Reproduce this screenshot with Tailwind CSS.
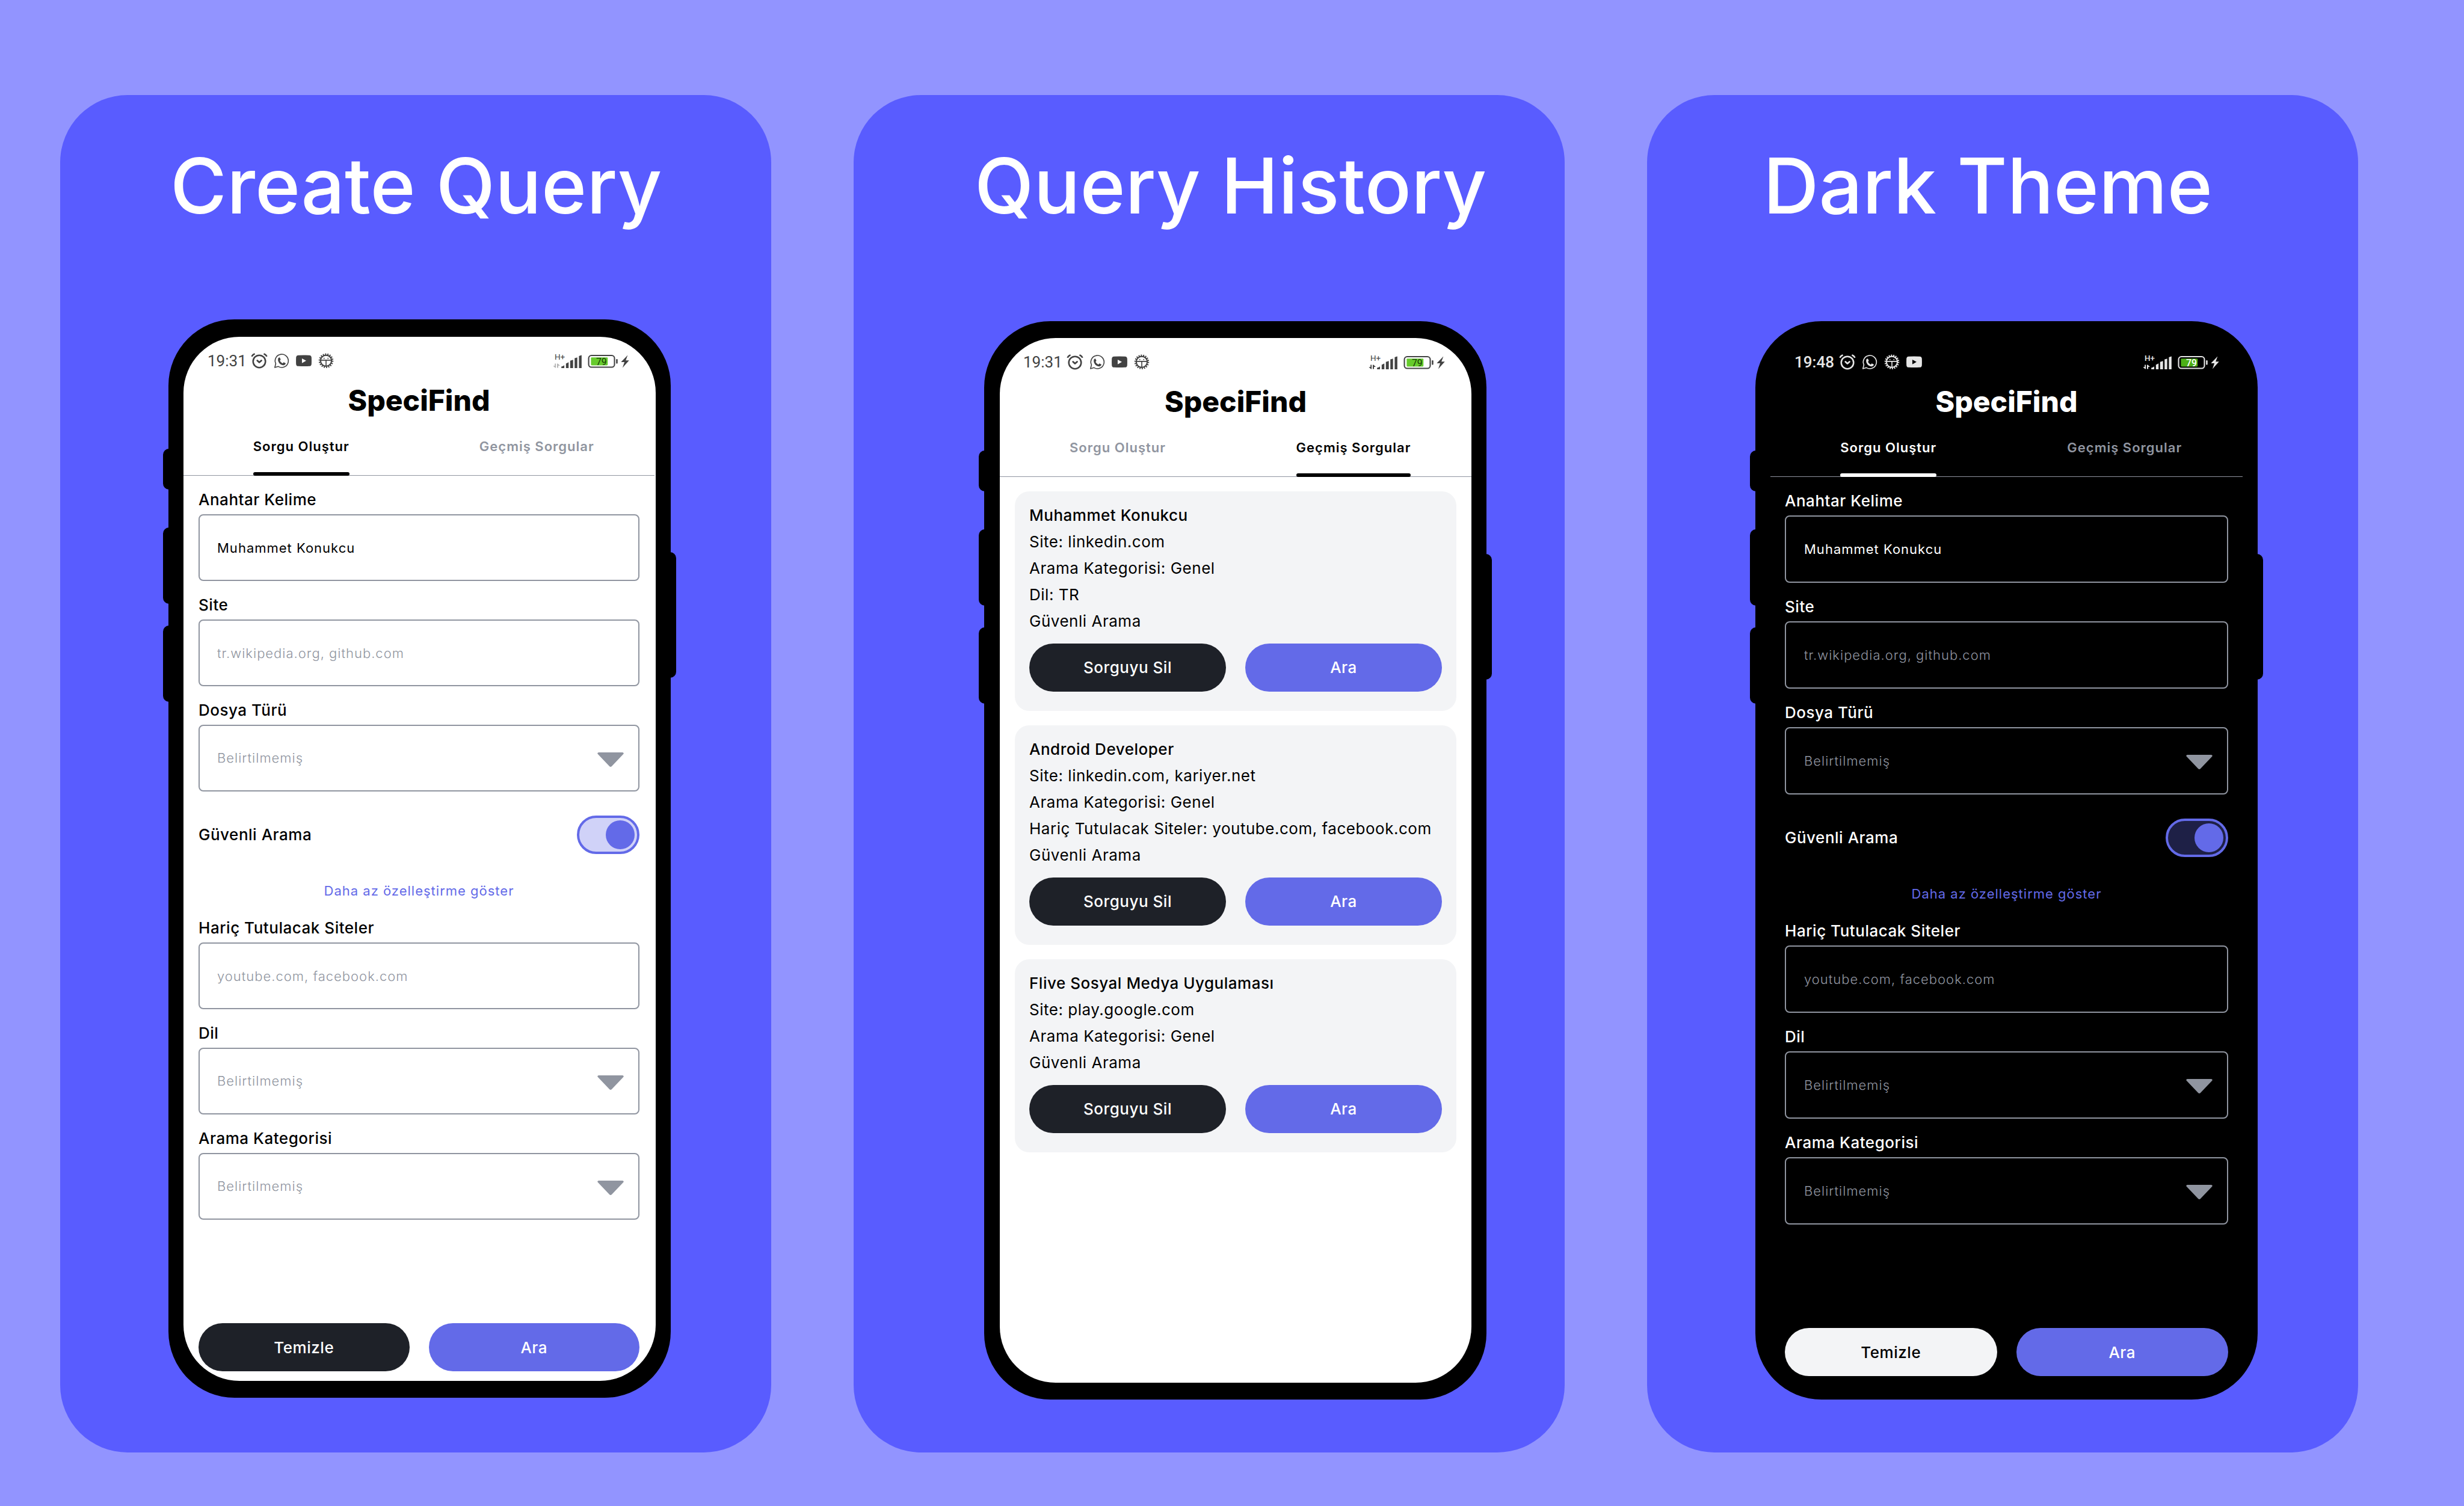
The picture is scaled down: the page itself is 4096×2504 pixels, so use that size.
<!DOCTYPE html>
<html lang="tr">
<head>
<meta charset="utf-8">
<meta name="viewport" content="width=device-width, initial-scale=1">
<title>SpeciFind</title>
<script src="https://cdn.jsdelivr.net/npm/@tailwindcss/browser@4"></script>
</head>
<body class="bg-[#9294ff] font-['Inter',sans-serif] antialiased">

<!-- Shared icon shapes -->
<svg class="hidden" aria-hidden="true">
  <symbol id="alarm" viewBox="378 53 120 120">
    <g fill="none" stroke="currentColor" stroke-linecap="round" stroke-linejoin="round">
      <circle cx="438" cy="117" r="44" stroke-width="11"/>
      <path d="M384 82Q391 68 406 63M492 82Q485 68 470 63" stroke-width="11" stroke-linecap="butt"/>
      <path d="M424 111l14 13 15-13" stroke-width="12"/>
    </g>
  </symbol>
  <symbol id="whatsapp" viewBox="539 53 120 120">
    <path d="M551 160l7-27a47 47 0 1 1 18 20z" fill="none" stroke="currentColor" stroke-width="7" stroke-linejoin="round"/>
    <path d="M574 97q4-9 12-9l7 15-6 9q7 14 20 19l7-8 15 7q0 9-12 14-19 3-35-16-11-14-8-31z" fill="currentColor"/>
  </symbol>
  <symbol id="youtube" viewBox="695 53 120 120">
    <path fill="currentColor" fill-rule="evenodd" d="M716 73q38-2 78 0 15 1 16 16 1 23 0 46-1 15-16 16-40 2-78 0-15-1-16-16-1-23 0-46 1-15 16-16zM742 96v33l30-17z"/>
  </symbol>
  <symbol id="bug" viewBox="849 53 120 120">
    <g fill="none" stroke="currentColor">
      <circle cx="909" cy="112" r="39" stroke-width="9"/>
      <circle cx="909" cy="112" r="47" stroke-width="11" stroke-dasharray="8 8.4"/>
      <path d="M870 108h78M909 108v42" stroke-width="7"/>
    </g>
    <circle cx="895" cy="95" r="4" fill="currentColor"/>
    <circle cx="923" cy="95" r="4" fill="currentColor"/>
  </symbol>
  <symbol id="caret" viewBox="0 0 44 28">
    <path fill="currentColor" d="M2 4h40q3 1 1 3L24 27q-2 2-4 0L1 7q-2-2 1-3z"/>
  </symbol>
  <symbol id="signal" viewBox="0 0 206 112">
    <path fill="currentColor" d="M60 108V97q12-2 21-10v21zM93 108V75q9-3 19-9v42zM123 108V55q10-3 21-7v60zM155 108V37q10-3 19-6v77zM186 108V22q8-4 19-7v93z"/>
  </symbol>
  <symbol id="arrows" viewBox="0 0 52 36">
    <path fill="currentColor" d="M13 3h8v31h-5L0 19h13zM29 3h5l17 15H38v15h-9z"/>
  </symbol>
  <symbol id="bolt" viewBox="0 0 60 90">
    <path fill="currentColor" d="M49 0L1 50h25L12 90 59 38H35z"/>
  </symbol>
</svg>

<main class="grid min-h-screen grid-cols-3 gap-[137px] pt-[158px] pr-[176px] pb-[89px] pl-[100px]">

  <!-- Create query -->
  <section class="flex flex-col rounded-[112px] bg-[#595cff] pt-[71px] pb-[91px]">
    <h2 class="pl-[183px] text-[128px] leading-[160px] font-medium whitespace-nowrap text-white">Create Query</h2>
    <div class="relative mt-[142px] mr-[167px] ml-[180px] flex flex-1 flex-col rounded-[110px] bg-black px-[25px] pt-[29px] pb-[28px]">
      <span class="absolute top-[215px] -left-[9px] h-[68px] w-[20px] rounded-l-[10px] bg-black"></span>
      <span class="absolute top-[346px] -left-[9px] h-[127px] w-[20px] rounded-l-[10px] bg-black"></span>
      <span class="absolute top-[509px] -left-[9px] h-[127px] w-[20px] rounded-l-[10px] bg-black"></span>
      <span class="absolute top-[387px] -right-[9px] h-[209px] w-[20px] rounded-r-[10px] bg-black"></span>

      <div class="flex flex-1 flex-col overflow-hidden rounded-[93px] bg-white pt-[27px] pr-[2px] pb-[16px] text-black">
        <div class="flex h-[26px] items-center pr-[42px] pl-[40px] font-['Roboto',sans-serif] text-[#424242]">
          <span class="w-[72px] text-[26px] leading-[26px]">19:31</span>
          <span class="flex gap-[9px]">
            <svg class="size-[28px]"><use href="#alarm"/></svg>
            <svg class="size-[28px]"><use href="#whatsapp"/></svg>
            <svg class="size-[28px]"><use href="#youtube"/></svg>
            <svg class="size-[28px]"><use href="#bug"/></svg>
          </span>
          <svg class="ml-auto h-[26px] w-[127px]" viewBox="40 53 545 112">
            <text x="52" y="100" font-size="58" fill="currentColor">H+</text>
            <use href="#arrows" x="40" y="125" width="52" height="36" color="#b4b4b4"/>
            <use href="#signal" x="40" y="53" width="206" height="112"/>
            <rect x="295.500" y="70.500" width="185" height="84" rx="20" fill="none" stroke="currentColor" stroke-width="9"/>
            <rect x="492" y="96" width="11" height="33" rx="5" fill="currentColor"/>
            <rect x="312" y="84" width="120" height="57" rx="5" fill="#66cb2c"/>
            <text x="349" y="138" font-size="68" fill="#173a05">79</text>
            <use href="#bolt" x="526" y="68" width="60" height="90"/>
          </svg>
        </div>
        <h1 class="mt-[24px] text-center text-[48px] leading-[58px] font-extrabold">SpeciFind</h1>
        <nav class="grid h-[96px] grid-cols-2 border-b border-[#9095a0] text-[22px] font-semibold tracking-[1px]">
          <button type="button" class="flex justify-center"><span class="relative flex h-full items-center">Sorgu Oluştur<span class="absolute inset-x-0 -bottom-px h-[6px] rounded-[3px] bg-black"></span></span></button>
          <button type="button" class="flex items-center justify-center text-[#9095a0]">Geçmiş Sorgular</button>
        </nav>

        <form class="flex flex-1 flex-col px-[25px]">
          <label for="l-key" class="h-[64px] pt-[24px] text-[26px] leading-[32px] font-medium tracking-[0.02em]">Anahtar Kelime</label>
          <input id="l-key" type="text" value="Muhammet Konukcu" class="h-[111px] rounded-[8px] border-2 border-[#9095a0] bg-transparent px-[29px] text-[22px] tracking-[1px]">
          <label for="l-site" class="h-[64px] pt-[24px] text-[26px] leading-[32px] font-medium tracking-[0.02em]">Site</label>
          <input id="l-site" type="text" placeholder="tr.wikipedia.org, github.com" class="h-[111px] rounded-[8px] border-2 border-[#9095a0] bg-transparent px-[29px] text-[22px] font-light tracking-[1px] placeholder:text-[#9095a0]">
          <label for="l-type" class="h-[64px] pt-[24px] text-[26px] leading-[32px] font-medium tracking-[0.02em]">Dosya Türü</label>
          <div class="relative">
            <select id="l-type" class="block h-[111px] w-full appearance-none rounded-[8px] border-2 border-[#9095a0] bg-transparent px-[29px] text-[22px] font-light tracking-[1px] text-[#9095a0]"><option>Belirtilmemiş</option></select>
            <svg class="pointer-events-none absolute top-[42px] right-[26px] h-[28px] w-[44px] text-[#9095a0]"><use href="#caret"/></svg>
          </div>
          <div class="mt-[40px] flex h-[64px] items-center justify-between">
            <label for="l-safe" class="text-[26px] leading-[32px] font-medium tracking-[0.02em]">Güvenli Arama</label>
            <input id="l-safe" type="checkbox" role="switch" checked class="flex h-[64px] w-[104px] appearance-none items-center justify-end rounded-full border-4 border-[#636ae8] bg-[#d0d2f8] pr-[4px] before:size-[48px] before:rounded-full before:bg-[#636ae8]">
          </div>
          <button type="button" class="mt-[39px] h-[44px] text-[22px] tracking-[1px] text-[#636ae8]">Daha az özelleştirme göster</button>
          <label for="l-not" class="h-[64px] pt-[24px] text-[26px] leading-[32px] font-medium tracking-[0.02em]">Hariç Tutulacak Siteler</label>
          <input id="l-not" type="text" placeholder="youtube.com, facebook.com" class="h-[111px] rounded-[8px] border-2 border-[#9095a0] bg-transparent px-[29px] text-[22px] font-light tracking-[1px] placeholder:text-[#9095a0]">
          <label for="l-lang" class="h-[64px] pt-[24px] text-[26px] leading-[32px] font-medium tracking-[0.02em]">Dil</label>
          <div class="relative">
            <select id="l-lang" class="block h-[111px] w-full appearance-none rounded-[8px] border-2 border-[#9095a0] bg-transparent px-[29px] text-[22px] font-light tracking-[1px] text-[#9095a0]"><option>Belirtilmemiş</option></select>
            <svg class="pointer-events-none absolute top-[42px] right-[26px] h-[28px] w-[44px] text-[#9095a0]"><use href="#caret"/></svg>
          </div>
          <label for="l-cat" class="h-[64px] pt-[24px] text-[26px] leading-[32px] font-medium tracking-[0.02em]">Arama Kategorisi</label>
          <div class="relative">
            <select id="l-cat" class="block h-[111px] w-full appearance-none rounded-[8px] border-2 border-[#9095a0] bg-transparent px-[29px] text-[22px] font-light tracking-[1px] text-[#9095a0]"><option>Belirtilmemiş</option></select>
            <svg class="pointer-events-none absolute top-[42px] right-[26px] h-[28px] w-[44px] text-[#9095a0]"><use href="#caret"/></svg>
          </div>
          <div class="mt-auto grid grid-cols-2 gap-[32px] text-[26px] font-medium tracking-[0.02em] text-white">
            <button type="reset" class="h-[80px] rounded-full bg-[#1e2128]">Temizle</button>
            <button type="submit" class="h-[80px] rounded-full bg-[#636ae8]">Ara</button>
          </div>
        </form>
      </div>
    </div>
  </section>

  <!-- Query history -->
  <section class="flex flex-col rounded-[112px] bg-[#595cff] pt-[71px] pb-[88px]">
    <h2 class="pl-[201px] text-[128px] leading-[160px] font-medium whitespace-nowrap text-white">Query History</h2>
    <div class="relative mt-[145px] mr-[130px] ml-[217px] flex flex-1 flex-col rounded-[110px] bg-black pt-[28px] pr-[25px] pb-[28px] pl-[26px]">
      <span class="absolute top-[215px] -left-[9px] h-[68px] w-[20px] rounded-l-[10px] bg-black"></span>
      <span class="absolute top-[346px] -left-[9px] h-[127px] w-[20px] rounded-l-[10px] bg-black"></span>
      <span class="absolute top-[509px] -left-[9px] h-[127px] w-[20px] rounded-l-[10px] bg-black"></span>
      <span class="absolute top-[387px] -right-[9px] h-[209px] w-[20px] rounded-r-[10px] bg-black"></span>

      <div class="flex flex-1 flex-col overflow-hidden rounded-[93px] bg-white pt-[27px] pb-[16px] text-black">
        <div class="flex h-[26px] items-center pr-[44px] pl-[39px] font-['Roboto',sans-serif] text-[#424242]">
          <span class="w-[72px] text-[26px] leading-[26px]">19:31</span>
          <span class="flex gap-[9px]">
            <svg class="size-[28px]"><use href="#alarm"/></svg>
            <svg class="size-[28px]"><use href="#whatsapp"/></svg>
            <svg class="size-[28px]"><use href="#youtube"/></svg>
            <svg class="size-[28px]"><use href="#bug"/></svg>
          </span>
          <svg class="ml-auto h-[26px] w-[127px]" viewBox="40 53 545 112">
            <text x="52" y="100" font-size="58" fill="currentColor">H+</text>
            <use href="#arrows" x="40" y="125" width="52" height="36"/>
            <use href="#signal" x="40" y="53" width="206" height="112"/>
            <rect x="295.500" y="70.500" width="185" height="84" rx="20" fill="none" stroke="currentColor" stroke-width="9"/>
            <rect x="492" y="96" width="11" height="33" rx="5" fill="currentColor"/>
            <rect x="312" y="84" width="120" height="57" rx="5" fill="#66cb2c"/>
            <text x="349" y="138" font-size="68" fill="#173a05">79</text>
            <use href="#bolt" x="526" y="68" width="60" height="90"/>
          </svg>
        </div>
        <h1 class="mt-[24px] text-center text-[48px] leading-[58px] font-extrabold">SpeciFind</h1>
        <nav class="grid h-[96px] grid-cols-2 border-b border-[#9095a0] text-[22px] font-semibold tracking-[1px]">
          <button type="button" class="flex items-center justify-center text-[#9095a0]">Sorgu Oluştur</button>
          <button type="button" class="flex justify-center"><span class="relative flex h-full items-center">Geçmiş Sorgular<span class="absolute inset-x-0 -bottom-px h-[6px] rounded-[3px] bg-black"></span></span></button>
        </nav>

        <div class="flex flex-col gap-[24px] px-[25px] pt-[24px] text-[26px] leading-[44px] tracking-[0.02em]">
          <article class="rounded-[24px] bg-[#f3f4f6] px-[24px] pt-[18px] pb-[32px]">
            <h3 class="font-medium">Muhammet Konukcu</h3>
            <p>Site: linkedin.com</p>
            <p>Arama Kategorisi: Genel</p>
            <p>Dil: TR</p>
            <p>Güvenli Arama</p>
            <div class="mt-[15px] grid grid-cols-2 gap-[32px] font-medium text-white">
              <button type="button" class="h-[80px] rounded-full bg-[#1e2128]">Sorguyu Sil</button>
              <button type="button" class="h-[80px] rounded-full bg-[#636ae8]">Ara</button>
            </div>
          </article>
          <article class="rounded-[24px] bg-[#f3f4f6] px-[24px] pt-[18px] pb-[32px]">
            <h3 class="font-medium">Android Developer</h3>
            <p>Site: linkedin.com, kariyer.net</p>
            <p>Arama Kategorisi: Genel</p>
            <p class="whitespace-nowrap">Hariç Tutulacak Siteler: youtube.com, facebook.com</p>
            <p>Güvenli Arama</p>
            <div class="mt-[15px] grid grid-cols-2 gap-[32px] font-medium text-white">
              <button type="button" class="h-[80px] rounded-full bg-[#1e2128]">Sorguyu Sil</button>
              <button type="button" class="h-[80px] rounded-full bg-[#636ae8]">Ara</button>
            </div>
          </article>
          <article class="rounded-[24px] bg-[#f3f4f6] px-[24px] pt-[18px] pb-[32px]">
            <h3 class="font-medium">Flive Sosyal Medya Uygulaması</h3>
            <p>Site: play.google.com</p>
            <p>Arama Kategorisi: Genel</p>
            <p>Güvenli Arama</p>
            <div class="mt-[15px] grid grid-cols-2 gap-[32px] font-medium text-white">
              <button type="button" class="h-[80px] rounded-full bg-[#1e2128]">Sorguyu Sil</button>
              <button type="button" class="h-[80px] rounded-full bg-[#636ae8]">Ara</button>
            </div>
          </article>
        </div>
      </div>
    </div>
  </section>

  <!-- Dark theme -->
  <section class="flex flex-col rounded-[112px] bg-[#595cff] pt-[71px] pb-[88px]">
    <h2 class="pl-[193px] text-[128px] leading-[160px] font-medium whitespace-nowrap text-white">Dark Theme</h2>
    <div class="relative mt-[145px] mr-[167px] ml-[180px] flex flex-1 flex-col rounded-[110px] bg-black px-[25px] pt-[28px] pb-[28px]">
      <span class="absolute top-[215px] -left-[9px] h-[68px] w-[20px] rounded-l-[10px] bg-black"></span>
      <span class="absolute top-[346px] -left-[9px] h-[127px] w-[20px] rounded-l-[10px] bg-black"></span>
      <span class="absolute top-[509px] -left-[9px] h-[127px] w-[20px] rounded-l-[10px] bg-black"></span>
      <span class="absolute top-[387px] -right-[9px] h-[209px] w-[20px] rounded-r-[10px] bg-black"></span>

      <div class="flex flex-1 flex-col rounded-[93px] bg-black pt-[27px] pb-[11px] text-white">
        <div class="flex h-[26px] items-center pr-[39px] pl-[40px] font-['Roboto',sans-serif] text-[#e6e6e6]">
          <span class="w-[74px] text-[26px] leading-[26px] font-medium">19:48</span>
          <span class="flex gap-[9px]">
            <svg class="size-[28px]"><use href="#alarm"/></svg>
            <svg class="size-[28px]"><use href="#whatsapp"/></svg>
            <svg class="size-[28px]"><use href="#bug"/></svg>
            <svg class="size-[28px]"><use href="#youtube"/></svg>
          </span>
          <svg class="ml-auto h-[26px] w-[127px]" viewBox="40 53 545 112">
            <text x="52" y="100" font-size="58" font-weight="500" fill="currentColor">H+</text>
            <use href="#arrows" x="40" y="125" width="52" height="36"/>
            <use href="#signal" x="40" y="53" width="206" height="112"/>
            <rect x="295.500" y="70.500" width="185" height="84" rx="20" fill="none" stroke="currentColor" stroke-width="9"/>
            <rect x="492" y="96" width="11" height="33" rx="5" fill="currentColor"/>
            <rect x="312" y="84" width="120" height="57" rx="5" fill="#4cb016"/>
            <text x="349" y="138" font-size="68" font-weight="500" fill="#ffffff">79</text>
            <use href="#bolt" x="526" y="68" width="60" height="90"/>
          </svg>
        </div>
        <h1 class="mt-[24px] text-center text-[48px] leading-[58px] font-extrabold">SpeciFind</h1>
        <nav class="grid h-[96px] grid-cols-2 border-b border-[#9095a0] text-[22px] font-semibold tracking-[1px]">
          <button type="button" class="flex justify-center"><span class="relative flex h-full items-center">Sorgu Oluştur<span class="absolute inset-x-0 -bottom-px h-[6px] rounded-[3px] bg-white"></span></span></button>
          <button type="button" class="flex items-center justify-center text-[#9095a0]">Geçmiş Sorgular</button>
        </nav>

        <form class="flex flex-1 flex-col px-[24px]">
          <label for="d-key" class="h-[64px] pt-[24px] text-[26px] leading-[32px] font-medium tracking-[0.02em]">Anahtar Kelime</label>
          <input id="d-key" type="text" value="Muhammet Konukcu" class="h-[112px] rounded-[8px] border-2 border-[#9095a0] bg-transparent px-[30px] text-[22px] tracking-[1px]">
          <label for="d-site" class="h-[64px] pt-[24px] text-[26px] leading-[32px] font-medium tracking-[0.02em]">Site</label>
          <input id="d-site" type="text" placeholder="tr.wikipedia.org, github.com" class="h-[112px] rounded-[8px] border-2 border-[#9095a0] bg-transparent px-[30px] text-[22px] font-light tracking-[1px] placeholder:text-[#9095a0]">
          <label for="d-type" class="h-[64px] pt-[24px] text-[26px] leading-[32px] font-medium tracking-[0.02em]">Dosya Türü</label>
          <div class="relative">
            <select id="d-type" class="block h-[112px] w-full appearance-none rounded-[8px] border-2 border-[#9095a0] bg-transparent px-[30px] text-[22px] font-light tracking-[1px] text-[#9095a0]"><option>Belirtilmemiş</option></select>
            <svg class="pointer-events-none absolute top-[42px] right-[26px] h-[28px] w-[44px] text-[#9095a0]"><use href="#caret"/></svg>
          </div>
          <div class="mt-[40px] flex h-[64px] items-center justify-between">
            <label for="d-safe" class="text-[26px] leading-[32px] font-medium tracking-[0.02em]">Güvenli Arama</label>
            <input id="d-safe" type="checkbox" role="switch" checked class="flex h-[64px] w-[104px] appearance-none items-center justify-end rounded-full border-4 border-[#636ae8] bg-[#1e2046] pr-[4px] before:size-[48px] before:rounded-full before:bg-[#636ae8]">
          </div>
          <button type="button" class="mt-[39px] h-[44px] text-[22px] tracking-[1px] text-[#636ae8]">Daha az özelleştirme göster</button>
          <label for="d-not" class="h-[64px] pt-[24px] text-[26px] leading-[32px] font-medium tracking-[0.02em]">Hariç Tutulacak Siteler</label>
          <input id="d-not" type="text" placeholder="youtube.com, facebook.com" class="h-[112px] rounded-[8px] border-2 border-[#9095a0] bg-transparent px-[30px] text-[22px] font-light tracking-[1px] placeholder:text-[#9095a0]">
          <label for="d-lang" class="h-[64px] pt-[24px] text-[26px] leading-[32px] font-medium tracking-[0.02em]">Dil</label>
          <div class="relative">
            <select id="d-lang" class="block h-[112px] w-full appearance-none rounded-[8px] border-2 border-[#9095a0] bg-transparent px-[30px] text-[22px] font-light tracking-[1px] text-[#9095a0]"><option>Belirtilmemiş</option></select>
            <svg class="pointer-events-none absolute top-[42px] right-[26px] h-[28px] w-[44px] text-[#9095a0]"><use href="#caret"/></svg>
          </div>
          <label for="d-cat" class="h-[64px] pt-[24px] text-[26px] leading-[32px] font-medium tracking-[0.02em]">Arama Kategorisi</label>
          <div class="relative">
            <select id="d-cat" class="block h-[112px] w-full appearance-none rounded-[8px] border-2 border-[#9095a0] bg-transparent px-[30px] text-[22px] font-light tracking-[1px] text-[#9095a0]"><option>Belirtilmemiş</option></select>
            <svg class="pointer-events-none absolute top-[42px] right-[26px] h-[28px] w-[44px] text-[#9095a0]"><use href="#caret"/></svg>
          </div>
          <div class="mt-auto grid grid-cols-2 gap-[32px] text-[26px] font-medium tracking-[0.02em] text-white">
            <button type="reset" class="h-[80px] rounded-full bg-[#f3f4f6] text-black">Temizle</button>
            <button type="submit" class="h-[80px] rounded-full bg-[#636ae8]">Ara</button>
          </div>
        </form>
      </div>
    </div>
  </section>
</main>
</body>
</html>
